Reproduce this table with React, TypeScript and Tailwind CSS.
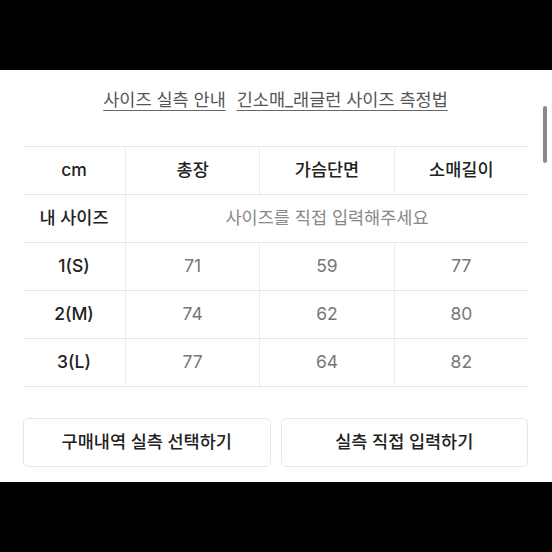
import React from "react";

const font = { fontFamily: 'Inter, "Noto Sans CJK KR", "Noto Sans", sans-serif' };

const rows = [
  { label: "1(S)", v: ["71", "59", "77"] },
  { label: "2(M)", v: ["74", "62", "80"] },
  { label: "3(L)", v: ["77", "64", "82"] },
];

export default function App() {
  return (
    <div className="w-[552px] h-[552px] flex flex-col bg-black" style={font}>
      <div className="h-[70px] bg-black" />
      <div className="relative flex-1 bg-white flex flex-col px-[23px] pr-[24px]">
        <div className="flex justify-center gap-[11px] pt-[18px] text-[17.5px] leading-[24px] text-[#555]">
          <span className="underline underline-offset-[4px] decoration-[#666]">사이즈 실측 안내</span>
          <span className="underline underline-offset-[4px] decoration-[#666]">긴소매_래글런 사이즈 측정법</span>
        </div>
        <div className="mt-[34px] border-t border-[#e6e6e6] text-[17.5px]">
          <div className="flex h-[48px] border-b border-[#e6e6e6]">
            <div className="w-[102px] flex items-center justify-center font-medium text-[#222]">cm</div>
            <div className="flex-1 border-l border-[#ececec] flex items-center justify-center font-medium text-[#222]">총장</div>
            <div className="flex-1 border-l border-[#ececec] flex items-center justify-center font-medium text-[#222]">가슴단면</div>
            <div className="flex-1 border-l border-[#ececec] flex items-center justify-center font-medium text-[#222]">소매길이</div>
          </div>
          <div className="flex h-[48px] border-b border-[#e6e6e6]">
            <div className="w-[102px] flex items-center justify-center font-medium text-[#222]">내 사이즈</div>
            <div className="flex-1 border-l border-[#ececec] flex items-center justify-center text-[#888]">사이즈를 직접 입력해주세요</div>
          </div>
          {rows.map((r) => (
            <div key={r.label} className="flex h-[48px] border-b border-[#e6e6e6]">
              <div className="w-[102px] flex items-center justify-center font-medium text-[#222]">{r.label}</div>
              {r.v.map((v, i) => (
                <div key={i} className="flex-1 border-l border-[#ececec] flex items-center justify-center text-[#777]">{v}</div>
              ))}
            </div>
          ))}
        </div>
        <div className="mt-[31px] flex gap-[10px]">
          <button className="flex-1 h-[49px] rounded-[5px] border border-[#e8e8e8] bg-white text-[17.5px] font-medium text-[#222] flex items-center justify-center">구매내역 실측 선택하기</button>
          <button className="flex-1 h-[49px] rounded-[5px] border border-[#e8e8e8] bg-white text-[17.5px] font-medium text-[#222] flex items-center justify-center">실측 직접 입력하기</button>
        </div>
        <div className="absolute right-[5px] top-[36px] w-[4px] h-[57px] rounded-full bg-[#8a8a8a]" />
      </div>
      <div className="h-[70px] bg-black" />
    </div>
  );
}
